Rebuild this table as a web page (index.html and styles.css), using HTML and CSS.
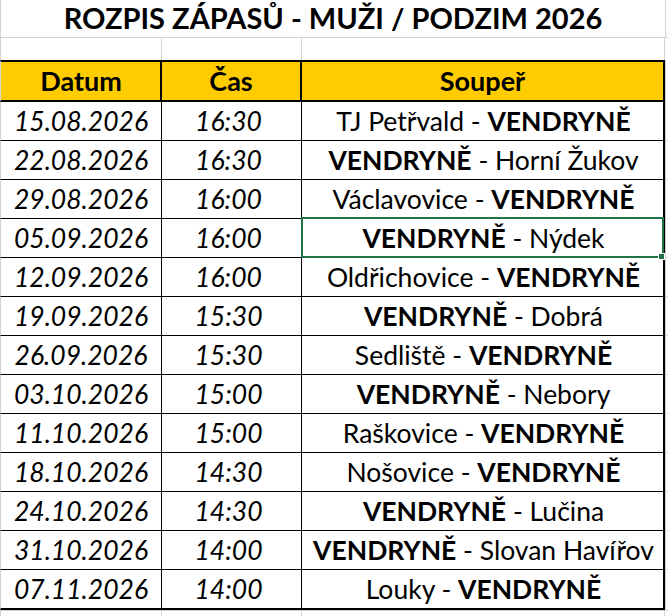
FILE: index.html
```html
<!DOCTYPE html>
<html lang="cs">
<head>
<meta charset="utf-8">
<title>Rozpis zápasů</title>
<link rel="stylesheet" href="styles.css">
</head>
<body>
<div class="sheet">
  <div class="row row-title">
    <div class="cell title">ROZPIS ZÁPASŮ - MUŽI / PODZIM 2026</div>
    <div class="cell edge"></div>
  </div>
  <div class="row row-blank">
    <div class="cell c1"></div>
    <div class="cell c2"></div>
    <div class="cell c3"></div>
    <div class="cell edge"></div>
  </div>
  <div class="row row-head">
    <div class="cell c1">Datum</div>
    <div class="cell c2">Čas</div>
    <div class="cell c3">Soupeř</div>
    <div class="cell edge"></div>
  </div>
  <div class="row row-data">
    <div class="cell c1">15.08.2026</div><div class="cell c2">16:30</div>
    <div class="cell c3">TJ Petřvald - <b>VENDRYNĚ</b></div><div class="cell edge"></div>
  </div>
  <div class="row row-data">
    <div class="cell c1">22.08.2026</div><div class="cell c2">16:30</div>
    <div class="cell c3"><b>VENDRYNĚ</b> - Horní Žukov</div><div class="cell edge"></div>
  </div>
  <div class="row row-data">
    <div class="cell c1">29.08.2026</div><div class="cell c2">16:00</div>
    <div class="cell c3">Václavovice - <b>VENDRYNĚ</b></div><div class="cell edge"></div>
  </div>
  <div class="row row-data">
    <div class="cell c1">05.09.2026</div><div class="cell c2">16:00</div>
    <div class="cell c3 selected"><b>VENDRYNĚ</b> - Nýdek</div><div class="cell edge"></div>
  </div>
  <div class="row row-data">
    <div class="cell c1">12.09.2026</div><div class="cell c2">16:00</div>
    <div class="cell c3">Oldřichovice - <b>VENDRYNĚ</b></div><div class="cell edge"></div>
  </div>
  <div class="row row-data">
    <div class="cell c1">19.09.2026</div><div class="cell c2">15:30</div>
    <div class="cell c3"><b>VENDRYNĚ</b> - Dobrá</div><div class="cell edge"></div>
  </div>
  <div class="row row-data">
    <div class="cell c1">26.09.2026</div><div class="cell c2">15:30</div>
    <div class="cell c3">Sedliště - <b>VENDRYNĚ</b></div><div class="cell edge"></div>
  </div>
  <div class="row row-data">
    <div class="cell c1">03.10.2026</div><div class="cell c2">15:00</div>
    <div class="cell c3"><b>VENDRYNĚ</b> - Nebory</div><div class="cell edge"></div>
  </div>
  <div class="row row-data">
    <div class="cell c1">11.10.2026</div><div class="cell c2">15:00</div>
    <div class="cell c3">Raškovice - <b>VENDRYNĚ</b></div><div class="cell edge"></div>
  </div>
  <div class="row row-data">
    <div class="cell c1">18.10.2026</div><div class="cell c2">14:30</div>
    <div class="cell c3">Nošovice - <b>VENDRYNĚ</b></div><div class="cell edge"></div>
  </div>
  <div class="row row-data">
    <div class="cell c1">24.10.2026</div><div class="cell c2">14:30</div>
    <div class="cell c3"><b>VENDRYNĚ</b> - Lučina</div><div class="cell edge"></div>
  </div>
  <div class="row row-data">
    <div class="cell c1">31.10.2026</div><div class="cell c2">14:00</div>
    <div class="cell c3"><b>VENDRYNĚ</b> - Slovan Havířov</div><div class="cell edge"></div>
  </div>
  <div class="row row-data row-last">
    <div class="cell c1">07.11.2026</div><div class="cell c2">14:00</div>
    <div class="cell c3">Louky - <b>VENDRYNĚ</b></div><div class="cell edge"></div>
  </div>
  <div class="row row-blank row-tail">
    <div class="cell c1"></div>
    <div class="cell c2"></div>
    <div class="cell c3"></div>
    <div class="cell edge"></div>
  </div>
</div>
</body>
</html>
```

FILE: styles.css
```css
html, body {
  margin: 0;
  padding: 0;
  background: #ffffff;
}

.sheet {
  width: 668px;
  height: 616px;
  overflow: hidden;
  display: flex;
  flex-direction: column;
  font-family: Lato, "Open Sans", sans-serif;
  color: #000000;
  background: #ffffff;
}

.row {
  display: grid;
  grid-template-columns: 162px 140px 363px 3px;
  flex: none;
}

.cell {
  box-sizing: border-box;
  display: block;
  text-align: center;
  white-space: nowrap;
  overflow: visible;
}

.edge {
  border-left: 1px solid #d4d4d4;
}

.c1 {
  border-left: 1px solid #d4d4d4;
}

/* Title row */
.row-title {
  height: 38px;
}

.row-title .cell {
  border-bottom: 1px solid #d4d4d4;
}

.title {
  grid-column: 1 / 4;
  border-left: 1px solid #d4d4d4;
  font-weight: 700;
  font-size: 29px;
  line-height: 35px;
}

/* Blank row */
.row-blank {
  height: 22px;
}

.row-blank .c1,
.row-blank .c2,
.row-blank .c3 {
  border-right: 1px solid #d4d4d4;
}

.row-blank .edge {
  border-left: none;
}

.row-tail {
  height: 8px;
}

.row-tail .cell {
  border-top: 1px solid #d4d4d4;
}

/* Header row */
.row-head {
  height: 42px;
}

.row-head .c1,
.row-head .c2,
.row-head .c3 {
  background: #ffcc00;
  border-top: 2px solid #000000;
  border-bottom: 2px solid #000000;
  font-weight: 700;
  font-size: 27px;
  line-height: 37px;
}

.row-head .c1 {
  border-right: 2px solid #000000;
  padding-left: 1px;
}

.row-head .c2 {
  border-right: 2px solid #000000;
}

.row-head .c3 {
  border-right: 2px solid #000000;
}

/* Data rows */
.row-data {
  height: 39px;
}

.row-data .c1,
.row-data .c2,
.row-data .c3 {
  border-bottom: 1px solid #000000;
  font-size: 26.5px;
  line-height: 38px;
}

.row-data .c1,
.row-data .c2 {
  font-style: italic;
  border-right: 1px solid #000000;
}

.row-data .c2 {
  padding-right: 6px;
}

.row-data .c3 {
  border-right: 2px solid #000000;
  padding-left: 2px;
}

.row-data .edge {
  border-bottom: 1px solid #d4d4d4;
}

.row-last {
  height: 40px;
}

.row-last .c1,
.row-last .c2,
.row-last .c3 {
  border-bottom: 2px solid #000000;
}

.row-last .edge {
  border-bottom: none;
}

b {
  font-weight: 700;
}

/* Selected cell (overlay) */
.selected {
  position: relative;
}

.selected::after {
  content: "";
  position: absolute;
  left: -1px;
  top: -2px;
  right: -1px;
  bottom: -1px;
  border: 2px solid #217346;
  pointer-events: none;
}

.selected::before {
  content: "";
  position: absolute;
  right: -2px;
  bottom: -3px;
  width: 5px;
  height: 5px;
  background: #217346;
  border: 1px solid #ffffff;
  z-index: 1;
}
```
